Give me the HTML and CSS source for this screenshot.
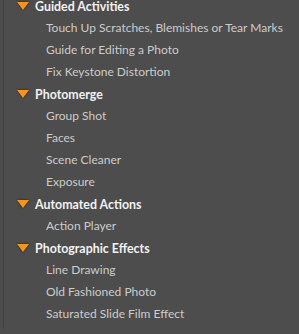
FILE: index.html
```html
<!DOCTYPE html>
<html lang="en">
<head>
    <meta charset="UTF-8">
    <meta name="viewport" content="width=device-width, initial-scale=1.0">
    <title>Guided Edits</title>
    <link rel="stylesheet" href="styles.css">
</head>
<body>
    <div class="panel">
        <ul class="tree">
            <li class="group">
                <div class="group-title"><span class="arrow"></span>Guided Activities</div>
                <ul class="items">
                    <li>Touch Up Scratches, Blemishes or Tear Marks</li>
                    <li>Guide for Editing a Photo</li>
                    <li>Fix Keystone Distortion</li>
                </ul>
            </li>
            <li class="group">
                <div class="group-title"><span class="arrow"></span>Photomerge</div>
                <ul class="items">
                    <li>Group Shot</li>
                    <li>Faces</li>
                    <li>Scene Cleaner</li>
                    <li>Exposure</li>
                </ul>
            </li>
            <li class="group">
                <div class="group-title"><span class="arrow"></span>Automated Actions</div>
                <ul class="items">
                    <li>Action Player</li>
                </ul>
            </li>
            <li class="group">
                <div class="group-title"><span class="arrow"></span>Photographic Effects</div>
                <ul class="items">
                    <li>Line Drawing</li>
                    <li>Old Fashioned Photo</li>
                    <li>Saturated Slide Film Effect</li>
                </ul>
            </li>
        </ul>
    </div>
</body>
</html>
```

FILE: styles.css
```css
html, body {
    margin: 0;
    padding: 0;
    height: 100%;
    background-color: #4d4d4d;
    overflow: hidden;
}
body {
    font-family: Lato, "Open Sans", sans-serif;
    font-size: 12px;
    white-space: nowrap;
}
.panel {
    margin-left: 3px;
    height: 100%;
    border-left: 1px solid #424242;
}
.tree, .items {
    list-style: none;
    margin: 0;
    padding: 0;
}
.tree {
    margin-top: -5px;
}
.group-title {
    display: flex;
    align-items: center;
    height: 22px;
    padding-left: 13px;
    color: #f2f2f2;
    font-size: 12.4px;
    font-weight: bold;
}
.arrow {
    width: 0;
    height: 0;
    margin-right: 6px;
    border-left: 6px solid transparent;
    border-right: 6px solid transparent;
    border-top: 8px solid #f7941d;
    filter: drop-shadow(0 0 1px #1a1a1a);
}
.items li {
    height: 22px;
    line-height: 22px;
    padding-left: 42px;
    color: #cccccc;
}
```
